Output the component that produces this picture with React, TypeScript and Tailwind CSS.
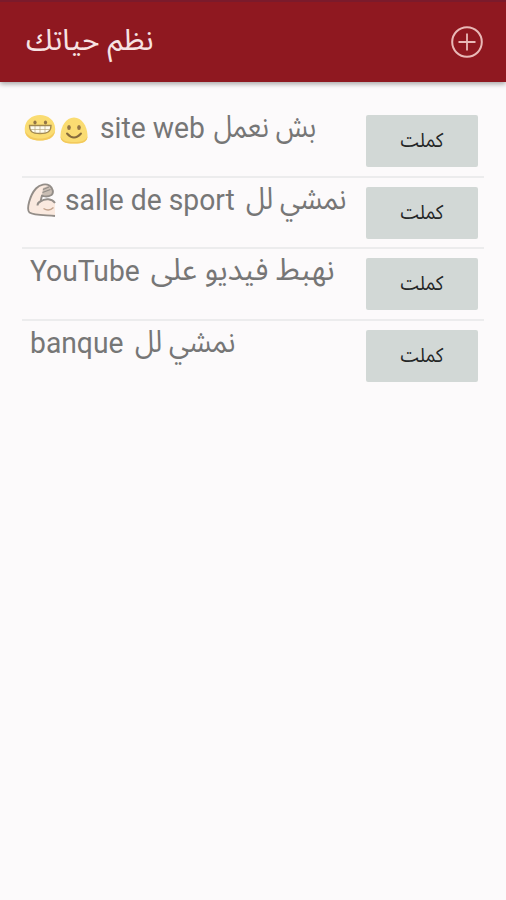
import React from "react";

function GrinEmoji() {
  return (
    <svg className="ml-px mt-[8px] h-[28px] w-[34px] shrink-0" viewBox="0 0 34 28">
      <path d="M17 1C25 1 32 6 32.200 15C32.400 23 26 26.500 17 26.500S1.500 23 1.700 15C2 6 9 1 17 1Z" fill="#fadc72" />
      <path d="M2 17C3 24 9 26.500 17 26.500S31 24 32 17C29 22 24 24.500 17 24.500S5 22 2 17Z" fill="#f3c95c" />
      <ellipse cx="12" cy="8.500" rx="1.600" ry="1.900" fill="#927546" />
      <ellipse cx="22.500" cy="8.500" rx="1.600" ry="1.900" fill="#927546" />
      <path d="M6.500 11.500H28C28 17.500 25 19.500 17 19.500S6.500 17.500 6.500 11.500Z" fill="#fffdf0" stroke="#a18850" strokeWidth="1.300" />
      <path d="M12 12V19M17 12V19.500M22 12V19M8 15.500H26.500" stroke="#b7a77f" strokeWidth=".7" />
    </svg>
  );
}

function SmileEmoji() {
  return (
    <svg className="ml-[2px] mt-[11px] h-[28px] w-[30px] shrink-0" viewBox="0 0 30 28">
      <path d="M15 .5C23 .5 28 9 28.500 18C28.800 25 24 26.500 15 26.500S1.200 25 1.500 18C2 9 7 .5 15 .5Z" fill="#fadc72" />
      <path d="M1.500 19C3 24 8 25 15 25S27 24 28.500 19C28.500 25 24 26.500 15 26.500S1.500 25 1.500 19Z" fill="#f3c95c" />
      <ellipse cx="10" cy="10.500" rx="1.800" ry="2.500" fill="#927546" />
      <ellipse cx="20" cy="10.500" rx="1.800" ry="2.500" fill="#927546" />
      <path d="M8 16.500Q15 24.500 22 16.500" fill="none" stroke="#856a3c" strokeWidth="1.900" strokeLinecap="round" />
    </svg>
  );
}

function BicepsEmoji() {
  return (
    <svg className="ml-[3px] mt-[5px] h-[36px] w-[32px] shrink-0" viewBox="0 0 32 36">
      <path d="M30 33C20 32 9 32.500 4.500 29.500C1 26.500 5 12 11 5.500C15 1 21 .5 24.500 2.500C28 5 29 10 26.500 12C23 14 20 14 17 12.500L15.500 18.500C20 15 27 15.500 30 20" fill="#fae9df" />
      <path d="M18 5L24.500 2.500C28 5 29 10 26.500 12C23 14 20 14 17 12.500Z" fill="#c9bdb3" />
      <path d="M30 33C20 32 9 32.500 4.500 29.500C1 26.500 5 12 11 5.500C15 1 21 .5 24.500 2.500C28 5 29 10 26.500 12C23 14 20 14 17 12.500L15.500 18.500C20 15 27 15.500 30 20M12.500 22.500C12.500 20 14 19 15.500 18.500" fill="none" stroke="#938d88" strokeWidth="1.900" strokeLinejoin="round" />
      <path d="M18 6.500L24 4M17.500 9.500L25.500 6.500" fill="none" stroke="#938d88" strokeWidth="1.200" />
      <path d="M18.500 25.500Q24 29 28.500 24.500" fill="none" stroke="#c4a48e" strokeWidth="1.400" />
    </svg>
  );
}

function Latin({ text, className }: { text: string; className: string }) {
  return (
    <span className={`mt-[2px] block h-[40px] shrink-0 whitespace-nowrap font-['Roboto',sans-serif] text-[29px] leading-[40px] ${className}`}>
      <span className="inline-block origin-left scale-x-[0.975]">{text}</span>
    </span>
  );
}

function Arabic({ text, className, fit }: { text: string; className: string; fit: string }) {
  return (
    <span dir="rtl" lang="ar" className={`mt-[2px] flex h-[40px] shrink-0 justify-start whitespace-nowrap font-['Noto_Sans_Arabic','DejaVu_Sans',sans-serif] text-[27px] leading-[40px] ${className}`}>
      <span className={`inline-block shrink-0 origin-right scale-y-[1.13] ${fit}`}>{text}</span>
    </span>
  );
}

function Row({ children, last }: { children: React.ReactNode; last?: boolean }) {
  return (
    <li className={`flex h-[71.700px] items-start ${last ? "" : "border-b-2 border-[#ececed]"}`}>
      <div className="flex h-full w-[344px] shrink-0 items-start text-[#767676]">{children}</div>
      <button lang="ar" className="mt-[9px] flex h-[52px] w-[112px] shrink-0 items-center justify-center rounded-[2px] bg-[#d2d8d6] font-['Noto_Sans_Arabic','DejaVu_Sans',sans-serif] text-[20px] text-[#242626]">
        <span className="inline-block scale-x-[0.9]">كملت</span>
      </button>
    </li>
  );
}

export default function App() {
  return (
    <div className="h-[900px] w-[506px] overflow-hidden bg-[#fcfafb]">
      <header className="flex h-[82px] items-start justify-between border-t-2 border-[#7b1a2b] bg-[#8f1820] pl-[24px] pr-[22px] shadow-[0_2px_5px_rgba(0,0,0,0.35)]">
        <h1 lang="ar" dir="rtl" className="mt-[19px] w-[129px] whitespace-nowrap font-['Noto_Sans_Arabic','DejaVu_Sans',sans-serif] text-[27px] leading-[40px] text-[#f7e3e3]">
          <span className="inline-block origin-right scale-x-[1.105] scale-y-[1.1]">نظم حياتك</span>
        </h1>
        <svg className="mt-[23px] h-[34px] w-[34px]" viewBox="0 0 34 34" fill="none" stroke="#e9b9b7">
          <circle cx="17" cy="17" r="14.800" strokeWidth="2" />
          <path d="M17 8.500V25.500M8.500 17H25.500" strokeWidth="1.800" />
        </svg>
      </header>
      <ul className="ml-[22px] mt-[24px] w-[462px]">
        <Row>
          <GrinEmoji />
          <SmileEmoji />
          <Latin text="site web" className="ml-[11px] w-[105px]" />
          <Arabic text="بش نعمل" className="ml-[7px] w-[104px]" fit="scale-x-[0.975]" />
        </Row>
        <Row>
          <BicepsEmoji />
          <Latin text="salle de sport" className="ml-[8px] w-[171px]" />
          <Arabic text="نمشي لل" className="ml-[9px] w-[101px]" fit="scale-x-[1.01]" />
        </Row>
        <Row>
          <Latin text="YouTube" className="ml-[8px] w-[111px]" />
          <Arabic text="نهبط فيديو على" className="ml-[8px] w-[186px]" fit="scale-x-[1.11]" />
        </Row>
        <Row last>
          <Latin text="banque" className="ml-[8px] w-[95px]" />
          <Arabic text="نمشي لل" className="ml-[8px] w-[102px]" fit="scale-x-[1.01]" />
        </Row>
      </ul>
    </div>
  );
}
